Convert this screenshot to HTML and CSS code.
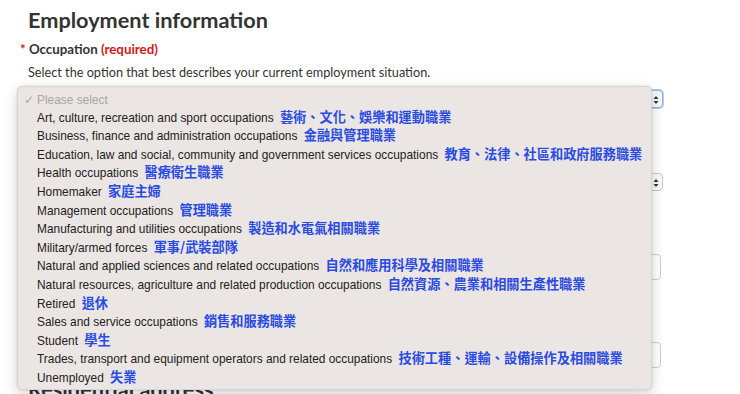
FILE: index.html
```html
<!DOCTYPE html>
<html lang="en">
<head>
<meta charset="utf-8">
<title>Employment information</title>
<link rel="stylesheet" href="styles.css">
</head>
<body>
<div class="page">
  <h2 class="title">Employment information</h2>
  <div class="field">
    <div class="label"><span class="req">*</span> Occupation <span class="req">(required)</span></div>
    <div class="hint">Select the option that best describes your current employment situation.</div>
    <div class="select focused"><span class="stepper"><svg width="6" height="10" viewBox="0 0 6 10"><path d="M3 1L5.5 4H0.5Z M3 9L5.5 6H0.5Z" fill="#333"/></svg></span></div>
  </div>
  <div class="field second">
    <div class="select"><span class="stepper"><svg width="6" height="10" viewBox="0 0 6 10"><path d="M3 1L5.5 4H0.5Z M3 9L5.5 6H0.5Z" fill="#333"/></svg></span></div>
  </div>
  <div class="field third">
    <div class="input"></div>
  </div>
  <div class="field fourth">
    <div class="input"></div>
  </div>
  <h2 class="title sub">Residential address</h2>

  <ul class="menu">
    <li class="placeholder"><span class="check">✓</span>Please select</li>
    <li>Art, culture, recreation and sport occupations <span class="zh">藝術、文化、娛樂和運動職業</span></li>
    <li>Business, finance and administration occupations <span class="zh">金融與管理職業</span></li>
    <li>Education, law and social, community and government services occupations <span class="zh">教育、法律、社區和政府服務職業</span></li>
    <li>Health occupations <span class="zh">醫療衛生職業</span></li>
    <li>Homemaker <span class="zh">家庭主婦</span></li>
    <li>Management occupations <span class="zh">管理職業</span></li>
    <li>Manufacturing and utilities occupations <span class="zh">製造和水電氣相關職業</span></li>
    <li>Military/armed forces <span class="zh">軍事/武裝部隊</span></li>
    <li>Natural and applied sciences and related occupations <span class="zh">自然和應用科學及相關職業</span></li>
    <li>Natural resources, agriculture and related production occupations <span class="zh">自然資源、農業和相關生產性職業</span></li>
    <li>Retired <span class="zh">退休</span></li>
    <li>Sales and service occupations <span class="zh">銷售和服務職業</span></li>
    <li>Student <span class="zh">學生</span></li>
    <li>Trades, transport and equipment operators and related occupations <span class="zh">技術工種、運輸、設備操作及相關職業</span></li>
    <li>Unemployed <span class="zh">失業</span></li>
  </ul>
</div>
</body>
</html>
```
FILE: styles.css
```css
html, body {
  margin: 0;
  padding: 0;
  background: #fff;
  overflow: hidden;
}
.page {
  position: relative;
  width: 740px;
  height: 394px;
  padding: 7px 77px 0 28px;
  box-sizing: border-box;
  font-family: Lato, "Liberation Sans", sans-serif;
  color: #333;
}
.title {
  margin: 0;
  font-size: 21.7px;
  font-weight: 700;
  line-height: 27px;
  color: #333;
}
.label {
  margin-top: 7px;
  margin-left: -8px;
  font-size: 13.3px;
  font-weight: 700;
  line-height: 16px;
}
.req {
  color: #d0191b;
}
.hint {
  margin-top: 7px;
  font-size: 12.7px;
  line-height: 16px;
}
.select {
  position: relative;
  margin-top: 10px;
  height: 18px;
  border: 1px solid #c9c9c9;
  border-radius: 4px;
  background: #fafafa;
  box-sizing: border-box;
}
.select.focused {
  border-color: #8fb3e6;
  box-shadow: 0 0 0 1px #b8cff0;
}
.stepper {
  position: absolute;
  right: 2px;
  top: 3px;
  width: 8px;
  height: 11px;
  display: flex;
  align-items: center;
  justify-content: center;
}
.second {
  margin-top: 65px;
}
.third {
  margin-top: 63px;
}
.fourth {
  margin-top: 62px;
}
.input {
  height: 26px;
  border: 1px solid #cfcfcf;
  border-radius: 4px;
  box-sizing: border-box;
}
.third .input { margin-right: 2px; }
.fourth .input { margin-right: 2px; }
.sub {
  margin-top: 8px;
}
.menu {
  position: absolute;
  left: 17px;
  top: 86px;
  width: 635px;
  height: 304px;
  margin: 0;
  padding: 2px 0 0 0;
  box-sizing: border-box;
  list-style: none;
  background: #ebe6e4;
  border-radius: 5px;
  border: 1px solid #d9d5d3;
  box-shadow: 0 4px 14px rgba(0, 0, 0, 0.18), 0 0 2px rgba(0, 0, 0, 0.12);
  font-family: "Liberation Sans", Arial, sans-serif;
  font-size: 11.9px;
  color: #222;
}
.menu li {
  height: 18.6px;
  line-height: 18.6px;
  padding-left: 19px;
  white-space: nowrap;
}
.menu li.placeholder {
  padding-left: 6px;
  line-height: 22.6px;
  color: #aaa7a5;
}
.check {
  display: inline-block;
  width: 13px;
  color: #aaa7a5;
}
.zh {
  font-family: "Noto Sans CJK TC", "Noto Sans CJK SC", sans-serif;
  font-weight: 700;
  font-size: 13.2px;
  color: #2a4be0;
  margin-left: 3px;
}
```
